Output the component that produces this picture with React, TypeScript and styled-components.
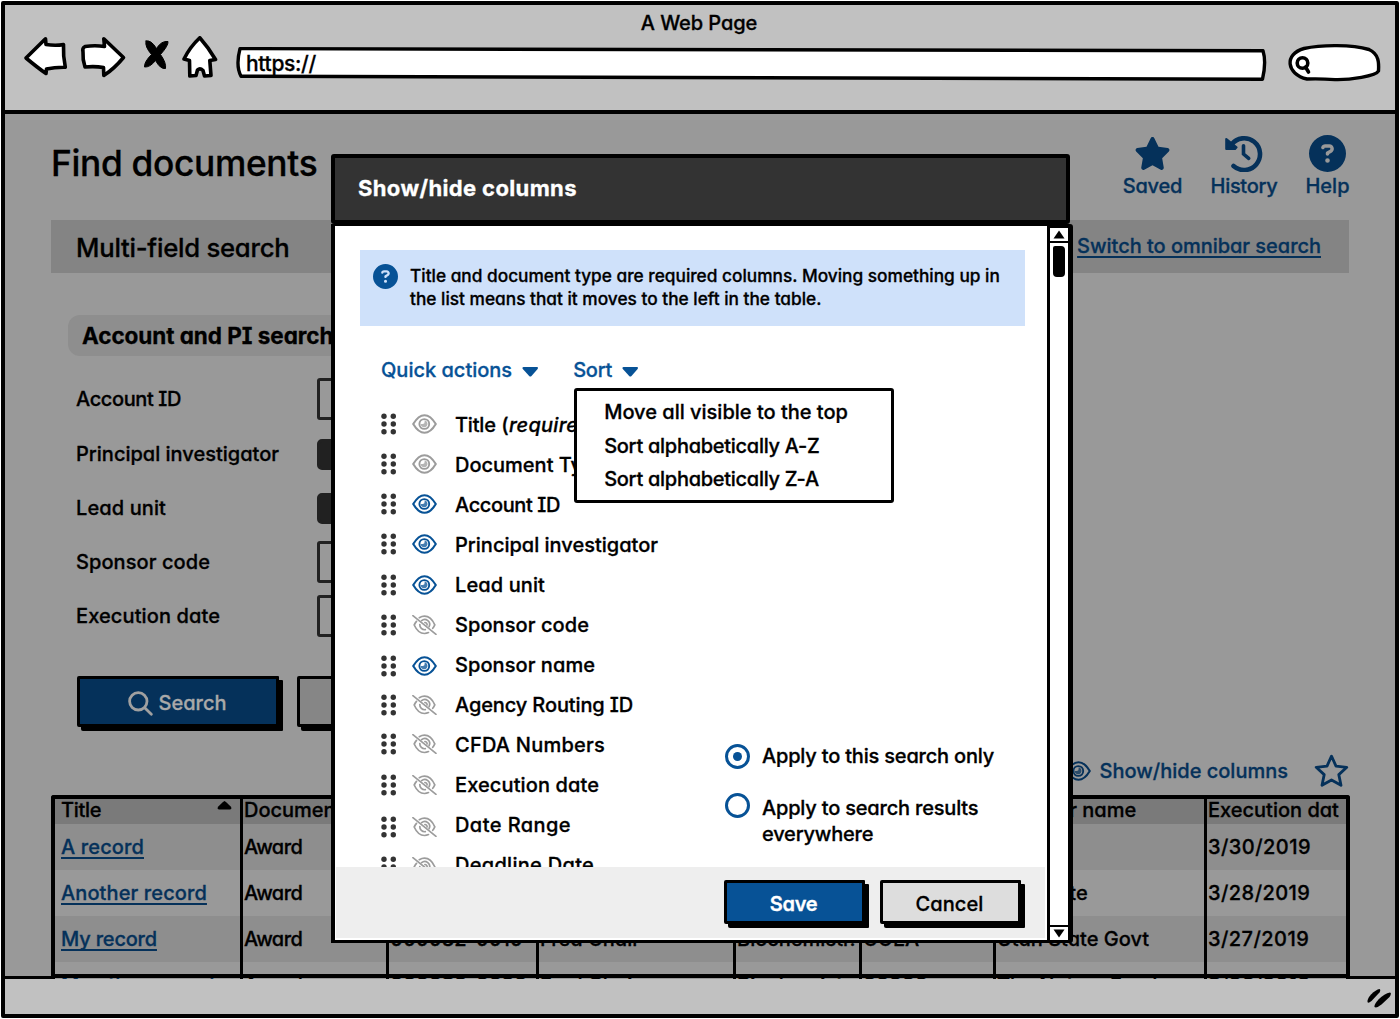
import React from "react";
import styled, { createGlobalStyle } from "styled-components";
import { FaCircleQuestion, FaStar } from "react-icons/fa6";

const navy = "#05315a";
const blue = "#075296";

const GlobalStyle = createGlobalStyle`
  *, *::before, *::after { box-sizing: border-box; }
  body {
    margin: 0;
    background: #fff;
    color: #000;
    font-family: Inter, "Liberation Sans", sans-serif;
    font-feature-settings: "cv11", "cv08", "ss03";
    font-size: 20px;
    font-weight: 500;
    -webkit-text-stroke-width: 0.3px;
    overflow: hidden;
  }
  svg { display: block; flex: none; }
`;

const Text = styled.span<{ $track?: number }>`
  letter-spacing: ${(p) => p.$track ?? 0}px;
  white-space: nowrap;
`;

/* ---------- browser window ---------- */

const Window = styled.div`
  position: relative;
  width: 1398px;
  height: 1017px;
  margin: 1px 0 0 1px;
  border: 4px solid #000;
  border-radius: 2px;
  display: flex;
  flex-direction: column;
`;

const Chrome = styled.header`
  height: 109px;
  background: #c1c1c1;
  border-bottom: 4px solid #000;
`;

const WindowTitle = styled.div`
  height: 31px;
  line-height: 36px;
  text-align: center;
  padding-right: 2px;
`;

const Toolbar = styled.div`
  display: flex;
  height: 46px;
  padding-left: 18px;
`;

const Glyph = styled.svg<{ $gap?: number }>`
  margin-left: ${(p) => p.$gap ?? 0}px;
  fill: #fff;
  stroke: #000;
  stroke-width: 3.6;
  stroke-linejoin: round;
  stroke-linecap: round;
`;

const Address = styled.div`
  position: relative;
  width: 1033px;
  margin-left: 16px;
  padding-left: 11px;
  line-height: 56px;
  font-size: 21px;
`;

const AddressOutline = styled(Glyph)`
  position: absolute;
  left: 0;
  top: 0;
  z-index: -1;
`;

const AddressLayer = styled.div`
  position: relative;
  z-index: 0;
`;

const StatusBar = styled.footer`
  height: 35px;
  background: #c1c1c1;
  display: flex;
  justify-content: flex-end;
  align-items: center;
  padding: 3px 4px 0 0;
`;

/* ---------- page behind the dialog ---------- */

const Page = styled.main`
  height: 865px;
  background: #999;
  box-shadow: inset 0 -3px 0 #000;
  overflow: hidden;
  color: #000;
`;

const PageHead = styled.div`
  height: 106px;
  padding: 0 45px 0 46px;
  display: flex;
  justify-content: space-between;
`;

const PageTitle = styled.h1`
  margin: 0;
  font-size: 35.300px;
  font-weight: 500;
  line-height: 99px;
  letter-spacing: -0.33px;
`;

const Nav = styled.nav`
  display: flex;
  gap: 27px;
  padding-top: 21px;
  color: ${navy};
`;

const NavItem = styled.a<{ $width: number }>`
  width: ${(p) => p.$width}px;
  display: flex;
  flex-direction: column;
  align-items: center;
  line-height: 28px;
`;

const SearchMode = styled.div`
  height: 53px;
  margin: 0 46px;
  padding: 0 28px 0 25px;
  background: #848484;
  display: flex;
  justify-content: space-between;
`;

const ModeName = styled.div`
  font-size: 25.700px;
  line-height: 56px;
  letter-spacing: -0.25px;
`;

const Link = styled.a<{ $track?: number }>`
  color: ${navy};
  letter-spacing: ${(p) => p.$track ?? 0}px;
  text-decoration: underline;
  text-decoration-thickness: 1.5px;
  text-underline-offset: 2.5px;
  text-decoration-skip-ink: none;
  white-space: nowrap;
`;

const ModeLink = styled(Link)`
  line-height: 52px;
`;

const SectionTitle = styled.h2`
  width: 300px;
  height: 41px;
  margin: 42px 0 15px 63px;
  padding-left: 14px;
  border-radius: 12px;
  background: #8e8e8e;
  font-size: 22.5px;
  font-weight: 700;
  line-height: 41px;
  letter-spacing: -0.05px;
  white-space: nowrap;
`;

const Fields = styled.div`
  display: grid;
  grid-template-columns: 241px 260px;
  grid-template-rows: 56px repeat(4, 54px);
  align-items: center;
  padding-left: 71px;
`;

const Field = styled.div<{ $filled?: boolean }>`
  height: ${(p) => (p.$filled ? 31 : 42)}px;
  border: 3px solid #212121;
  border-radius: ${(p) => (p.$filled ? 5 : 3)}px;
  background: ${(p) => (p.$filled ? "#212121" : "transparent")};
`;

const FormButtons = styled.div`
  display: flex;
  gap: 18px;
  margin: 33px 0 19px 72px;
`;

const Button = styled.div<{ $bg: string; $ink: string; $w: number; $h: number; $bold?: boolean }>`
  width: ${(p) => p.$w}px;
  height: ${(p) => p.$h}px;
  border: 3px solid #000;
  border-radius: 2px 1px 1px 2px;
  box-shadow: 4px 4px 0 #000;
  background: ${(p) => p.$bg};
  color: ${(p) => p.$ink};
  font-weight: ${(p) => (p.$bold ? 600 : 500)};
  display: flex;
  align-items: center;
  justify-content: center;
  gap: 6px;
  padding: 3px 2px 0 0;
`;

const TableTools = styled.div`
  height: 49px;
  padding-right: 46px;
  display: flex;
  align-items: center;
  justify-content: flex-end;
  color: ${navy};
`;

const ToolLabel = styled.span`
  margin: 0 26px 0 9px;
  line-height: 26px;
`;

const Table = styled.div`
  position: relative;
  width: 1299px;
  height: 184px;
  margin-left: 46px;
  border: solid #000;
  border-width: 4px 4px 0;
  border-radius: 3px 3px 0 0;
  overflow: hidden;
  &::after {
    content: "";
    position: absolute;
    left: -4px;
    right: -4px;
    bottom: 1.5px;
    height: 3.5px;
    background: #000;
  }
`;

const TableRow = styled.div<{ $bg: string; $head?: boolean }>`
  display: grid;
  grid-template-columns: 188px 146px 150px 197px 126px 134px 211px 139px;
  height: ${(p) => (p.$head ? 25 : 46)}px;
  line-height: ${(p) => (p.$head ? 23 : 46)}px;
  background: ${(p) => p.$bg};
`;

const Cell = styled.div`
  border-right: 3px solid #000;
  padding-left: 1px;
  overflow: hidden;
  white-space: nowrap;
  &:first-child { padding-left: 6px; display: flex; justify-content: space-between; }
  &:last-child { border-right: 0; }
`;

const SortMark = styled.svg`
  margin: 2px 8px 0 0;
`;

/* ---------- dialog ---------- */

const Dialog = styled.section`
  position: absolute;
  left: 326px;
  top: 149px;
  width: 742px;
`;

const DialogHead = styled.div`
  width: 739px;
  height: 70px;
  padding-left: 23px;
  border: 4px solid #000;
  border-radius: 3px;
  background: #333;
  color: #fff;
  font-size: 22px;
  font-weight: 700;
  line-height: 61px;
`;

const DialogBody = styled.div`
  height: 719px;
  border: solid #000;
  border-width: 2px 5px 3px 4px;
  border-radius: 0 3px 3px 0;
  background: #fff;
  display: flex;
`;

const Pane = styled.div`
  width: 712px;
  padding-top: 24px;
`;

const Notice = styled.div`
  width: 665px;
  height: 76px;
  margin-left: 25px;
  padding: 14px 0 0 13px;
  background: #cfe1fa;
  display: flex;
  gap: 12px;
  font-size: 17.3px;
  line-height: 22.5px;
  white-space: nowrap;
  svg { color: ${blue}; }
`;

const NoticeText = styled.p`
  margin: 0;
  padding-top: 1px;
`;

const Actions = styled.div`
  display: flex;
  gap: 35px;
  height: 40px;
  margin: 24px 0 15px 46px;
  color: ${blue};
`;

const Trigger = styled.div`
  position: relative;
  display: flex;
  align-items: center;
  gap: 10px;
  padding-right: 0;
  > svg { margin: 2px -1px 0 0; }
`;

const Menu = styled.div`
  position: absolute;
  z-index: 2;
  left: 1px;
  top: 38px;
  width: 320px;
  height: 115px;
  padding: 5px 0 0 27px;
  border: 3.5px solid #000;
  border-radius: 3px;
  background: #fff;
  color: #000;
  display: flex;
  flex-direction: column;
  line-height: 33.6px;
`;

const Columns = styled.div`
  height: 462px;
  padding-left: 46px;
  display: grid;
  grid-template-columns: 344px 1fr;
  overflow: hidden;
`;

const ColumnRow = styled.div`
  height: 40px;
  display: flex;
  align-items: center;
  white-space: nowrap;
`;

const RowIcons = styled.div<{ $shift: number }>`
  display: flex;
  align-items: center;
  gap: 15px;
  width: 74px;
  transform: translateY(${(p) => p.$shift}px);
`;

const Options = styled.div`
  padding-top: 339px;
  display: flex;
  flex-direction: column;
  gap: 24px;
`;

const Option = styled.div<{ $drop?: boolean }>`
  display: grid;
  grid-template-columns: 37px 1fr;
  line-height: 25.4px;
  letter-spacing: -0.19px;
  > span { padding-top: ${(p) => (p.$drop ? 3 : 0)}px; }
`;

const Radio = styled.div<{ $on?: boolean }>`
  width: 25px;
  height: 25px;
  border: 3px solid ${blue};
  border-radius: 50%;
  display: grid;
  place-items: center;
  &::after {
    content: "";
    width: 9px;
    height: 9px;
    border-radius: 50%;
    background: ${(p) => (p.$on ? blue : "transparent")};
  }
`;

const DialogFoot = styled.div`
  width: 709px;
  height: 71px;
  margin-left: 1px;
  padding: 13px 0 0 388px;
  background: #eee;
  display: flex;
  gap: 15px;
`;

const ScrollBar = styled.div`
  flex: 1;
  border-left: 3px solid #000;
  display: flex;
  flex-direction: column;
`;

const ScrollArrow = styled.div<{ $end?: boolean }>`
  height: ${(p) => (p.$end ? 15 : 17)}px;
  border: solid #000;
  border-width: ${(p) => (p.$end ? "2px 0 0" : "2px 0 2px")};
  display: grid;
  place-items: center;
`;

const Thumb = styled.div`
  width: 12px;
  height: 31px;
  margin: 3px 3px auto;
  border-radius: 2px 4px 4px 4px;
  background: #000;
`;

/* ---------- drawings ---------- */

const almond = "M1.200 10C4.800 4 8.600 1.200 12.500 1.200S20.200 4 23.800 10C20.200 16 16.400 18.800 12.500 18.800S4.800 16 1.200 10Z";

function Eye({ color }: { color: string }) {
  return (
    <svg width="25" height="20" viewBox="0 0 25 20" fill="none" stroke={color} strokeWidth="2.100">
      <path d={almond} strokeLinejoin="round" />
      <circle cx="12.300" cy="10" r="4.900" strokeWidth="1.900" />
      <path d="M12.600 6.200v1.800a1.900 1.900 0 0 1-1.900 2H8.600q.4 3.200 3.700 3.200q3-.300 3.200-3.300q-.2-3.200-2.900-3.700z" fill={color} stroke="none" opacity=".75" />
    </svg>
  );
}

function EyeOff() {
  return (
    <svg width="25" height="20" viewBox="0 0 25 20" fill="none" stroke="#9c9c9c" strokeWidth="1.700" strokeLinecap="round">
      <path d="M7.300 2.700C9 1.700 10.700 1.200 12.500 1.200c4 0 7.600 2.700 10.300 8.600-.7 1.400-1.300 2.600-2.100 3.500M16.500 17.600c-1.300.6-2.600.9-4 .9-4.100 0-7.700-2.700-10.300-8.500.7-1.400 1.400-2.600 2.300-3.600" />
      <path d="M9.600 5.700a4.900 4.900 0 0 1 7.500 6M13.300 14.700a4.900 4.900 0 0 1-5.500-5.200M12.900 7.500a2.200 2.200 0 0 1 2.200 2.500" />
      <path d="M.9.700L24 19.300" />
    </svg>
  );
}

function Handle() {
  return (
    <svg width="16" height="22" viewBox="0 0 16 22" fill="#333">
      {[3.3, 11, 18.7].map((y) => (
        <React.Fragment key={y}>
          <circle cx="3" cy={y} r="2.700" />
          <circle cx="12.300" cy={y} r="2.700" />
        </React.Fragment>
      ))}
    </svg>
  );
}

function Caret() {
  return (
    <svg width="17" height="11" viewBox="0 0 17 11" fill={blue}>
      <path d="M1.600 1h13.300q1.800.300.700 1.900l-6.100 7q-1.200 1-2.300 0L.8 2.900Q-.2 1.400 1.600 1z" />
    </svg>
  );
}

function HistoryIcon() {
  return (
    <svg width="38" height="37" viewBox="1225.500 135 38 37" fill="none" stroke={navy}>
      <path d="M1232 144.500A15.900 15.900 0 1 1 1234 166" strokeWidth="4.600" strokeLinecap="round" />
      <path d="M1226.800 139l10.200 8.300-1.500 1.600h-8.700z" fill={navy} strokeWidth="2.200" strokeLinejoin="round" />
      <path d="M1244 145.800v8.200l5.200 4.400" strokeWidth="3.600" strokeLinecap="round" />
    </svg>
  );
}

/* ---------- content ---------- */

const records = [
  ["A record", "Award", "000030-0010", "Fred Chair", "Biochemistr.", "COEA", "", "3/30/2019"],
  ["Another record", "Award", "000031-0010", "Fred Chair", "Biochemistr.", "COEA", "Our State", "3/28/2019"],
  ["My record", "Award", "000032-0010", "Fred Chair", "Biochemistr.", "COEA", "Utah State Govt", "3/27/2019"],
  ["My other record", "Award", "000032-0020", "Fred Chair", "Biochemistr.", "00000", "The Nature Fund", "3/26/2019"],
];
const heads = ["Title", "Document", "Account ID", "Investigator", "Lead unit", "Code", "Sponsor name", "Execution dat"];
const linkTrack = [0.13, 0.11, -0.19, 0];

type Visibility = "locked" | "on" | "off";
const columns: [string, Visibility, number, number][] = [
  ["Title", "locked", -1, -0.2],
  ["Document Type", "locked", -1, 0],
  ["Account ID", "on", -1, -0.39],
  ["Principal investigator", "on", -1, 0],
  ["Lead unit", "on", 0, 0.11],
  ["Sponsor code", "off", 0, 0.08],
  ["Sponsor name", "on", 1, 0.07],
  ["Agency Routing ID", "off", 0, -0.12],
  ["CFDA Numbers", "off", -1, 0.23],
  ["Execution date", "off", 0, 0.11],
  ["Date Range", "off", 2, 0.43],
  ["Deadline Date", "off", 2, 0.3],
];

export default function App() {
  return (
    <>
      <GlobalStyle />
      <Window>
        <Chrome>
          <WindowTitle><Text $track={-0.08}>A Web Page</Text></WindowTitle>
          <Toolbar>
            <Glyph width="46" height="46" viewBox="23 36 46 46">
              <path d="M26 58L45.500 38.800L46 44.500Q55 45.800 63.500 44.600Q63 56 65.300 67.200Q55 67 46.500 69L46 73.500Q38 68 26 58Z" />
            </Glyph>
            <Glyph $gap={10} width="48" height="46" viewBox="79 36 48 46">
              <path d="M123.500 57.500L103.800 38.800L104.500 46.500Q95 45 85 46.500Q82 48 83 52Q82.500 60 85 67Q95 66 103.500 67.500L103.800 75.500Q114 69 123.500 57.500Z" />
            </Glyph>
            <Glyph $gap={14} width="30" height="46" viewBox="141 36 30 46">
              <path fill="#000" strokeWidth="1" d="M146 41q5-1.500 10.500 7.500q5-8 11.500-7q.5 4-7.500 13q6 8.500 5 14q-5 1-10-8q-5.500 7-11 6.500q-.5-5 7-12.500q-7-8-5.500-13.500z" />
            </Glyph>
            <Glyph $gap={10} width="38" height="46" viewBox="181 36 38 46">
              <path d="M199.800 37.800Q208 47 215.500 59.500L209.800 60.500L211 75.500L204.500 76L203 70.500Q200 67.500 197.500 70L196 75.500L189.800 76L189.500 60.500L184 59Q190 47 199.800 37.800Z" />
            </Glyph>
            <AddressLayer>
              <Address>
                <AddressOutline width="1033" height="46" viewBox="235 36 1033 46">
                  <path strokeWidth="3.400" d="M240 48.600Q700 48.300 1263 50.800Q1266.500 62 1262.500 79.200Q900 78 241 76.200Q235.500 66 240 48.600Z" />
                </AddressOutline>
                <Text $track={-0.32}>https://</Text>
              </Address>
            </AddressLayer>
            <Glyph $gap={19} width="95" height="46" viewBox="1287 36 95 46">
              <path strokeWidth="3.400" d="M1307 79C1286 74 1284 54 1304 48.500C1322 44.500 1352 44.500 1369 49.500C1379 54 1379 63 1378.500 71C1376 76 1350 80 1335 79.600Q1320 78.500 1307 79Z" />
              <circle cx="1302.500" cy="63" r="5.300" />
              <path d="M1305.500 67L1308.500 72" />
            </Glyph>
          </Toolbar>
        </Chrome>

        <Page>
          <PageHead>
            <PageTitle>Find documents</PageTitle>
            <Nav>
              <NavItem $width={61}><FaStar size={37} /><Text $track={-0.2}>Saved</Text></NavItem>
              <NavItem $width={68}><HistoryIcon /><Text $track={-0.3}>History</Text></NavItem>
              <NavItem $width={45}><FaCircleQuestion size={37} /><Text>Help</Text></NavItem>
            </Nav>
          </PageHead>
          <SearchMode>
            <ModeName>Multi-field search</ModeName>
            <ModeLink $track={-0.03}>Switch to omnibar search</ModeLink>
          </SearchMode>
          <SectionTitle>Account and PI search</SectionTitle>
          <Fields>
            <Text $track={-0.39}>Account ID</Text><Field />
            <Text>Principal investigator</Text><Field $filled />
            <Text $track={0.11}>Lead unit</Text><Field $filled />
            <Text $track={0.08}>Sponsor code</Text><Field />
            <Text $track={0.11}>Execution date</Text><Field />
          </Fields>
          <FormButtons>
            <Button $bg={navy} $ink="#a9a9a9" $w={202} $h={51}>
              <svg width="25" height="25" viewBox="0 0 25 25" fill="none" stroke="#a0a0a0" strokeWidth="2.800" strokeLinecap="round">
                <circle cx="10.300" cy="10.300" r="8.700" /><path d="M16.700 16.700L23.300 23.200" />
              </svg>
              <Text>Search</Text>
            </Button>
            <Button $bg="#868686" $ink="#000" $w={202} $h={51} />
          </FormButtons>
          <TableTools>
            <Eye color={navy} />
            <ToolLabel>Show/hide columns</ToolLabel>
            <svg width="35" height="34" viewBox="0 0 35 34" fill="none" stroke={navy} strokeWidth="2.800" strokeLinejoin="round">
              <path d="M17.500 2.200L22 12.100L32.800 13.300L24.800 20.600L27 31.300L17.500 26L8 31.300L10.200 20.600L2.200 13.300L13 12.100Z" />
            </svg>
          </TableTools>
          <Table>
            <TableRow $bg="#7a7a7a" $head>
              {heads.map((h, i) => (
                <Cell key={h}>
                  <Text $track={i === 0 ? -0.3 : 0}>{h}</Text>
                  {i === 0 && <SortMark width="15" height="9" viewBox="0 0 15 9"><path d="M7.500 0Q8.500.2 13.700 5.600Q15.500 8 13 8.500H2Q-.5 8 1.300 5.600Q6.500.2 7.500 0Z" /></SortMark>}
                </Cell>
              ))}
            </TableRow>
            {records.map((r, n) => (
              <TableRow key={n} $bg={n % 2 ? "#999" : "#8e8e8e"}>
                {r.map((c, i) => (
                  <Cell key={i}>
                    {i === 0 ? <Link $track={linkTrack[n]}>{c}</Link> : <Text $track={i === 1 ? -0.6 : i === 7 ? 0.45 : 0}>{c}</Text>}
                  </Cell>
                ))}
              </TableRow>
            ))}
          </Table>
        </Page>

        <StatusBar>
          <svg width="25" height="20" viewBox="1366 989 25 20" fill="#000">
            <path d="M1379.500 990q1.500.5 0 3.500l-8 8.500q-3.500 3-4 1q-.5-3 3.500-7.500q5-5 8.500-5.500z" />
            <path d="M1390 993.500q2 .5-.5 4.500l-8 7.500q-5 4-7 2.500q-.5-2.500 4-7.500q6-6 11.500-7z" />
          </svg>
        </StatusBar>

        <Dialog>
          <DialogHead><Text $track={0.37}>Show/hide columns</Text></DialogHead>
          <DialogBody>
            <Pane>
              <Notice>
                <FaCircleQuestion size={25} />
                <NoticeText>
                  Title and document type are required columns. Moving something up in<br />
                  the list means that it moves to the left in the table.
                </NoticeText>
              </Notice>
              <Actions>
                <Trigger><Text>Quick actions</Text><Caret /></Trigger>
                <Trigger>
                  <Text $track={-0.2}>Sort</Text><Caret />
                  <Menu>
                    <Text>Move all visible to the top</Text>
                    <Text $track={-0.28}>Sort alphabetically A-Z</Text>
                    <Text $track={-0.28}>Sort alphabetically Z-A</Text>
                  </Menu>
                </Trigger>
              </Actions>
              <Columns>
                <div>
                  {columns.map(([name, state, shift, track]) => (
                    <ColumnRow key={name}>
                      <RowIcons $shift={shift}>
                        <Handle />
                        {state === "off" ? <EyeOff /> : <Eye color={state === "on" ? blue : "#9c9c9c"} />}
                      </RowIcons>
                      <Text $track={track}>{name}</Text>
                      {name === "Title" && <Text $track={0.25}>&nbsp;(<i>required)</i></Text>}
                    </ColumnRow>
                  ))}
                </div>
                <Options>
                  <Option><Radio $on /><span>Apply to this search only</span></Option>
                  <Option $drop><Radio /><span>Apply to search results<br />everywhere</span></Option>
                </Options>
              </Columns>
              <DialogFoot>
                <Button $bg={blue} $ink="#fff" $w={141} $h={44} $bold><Text $track={-0.3}>Save</Text></Button>
                <Button $bg="#ddd" $ink="#000" $w={141} $h={44}><Text $track={0.1}>Cancel</Text></Button>
              </DialogFoot>
            </Pane>
            <ScrollBar>
              <ScrollArrow>
                <svg width="12" height="9" viewBox="0 0 12 9"><path d="M6 .5L11.500 8.500H.5Z" /></svg>
              </ScrollArrow>
              <Thumb />
              <ScrollArrow $end>
                <svg width="12" height="9" viewBox="0 0 12 9"><path d="M6 8.500L11.500.5H.5Z" /></svg>
              </ScrollArrow>
            </ScrollBar>
          </DialogBody>
        </Dialog>
      </Window>
    </>
  );
}
